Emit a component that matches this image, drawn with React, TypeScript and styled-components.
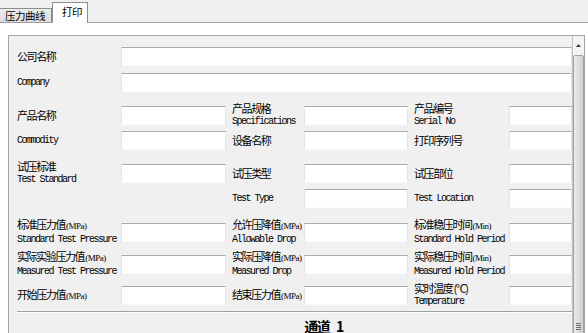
import styled, { createGlobalStyle } from 'styled-components';

const GlobalStyle = createGlobalStyle`
  html, body {
    margin: 0;
    padding: 0;
    overflow: hidden;
    background: #ffffff;
  }
  * { box-sizing: border-box; }
`;

const Window = styled.div`
  width: 588px;
  height: 333px;
  display: flex;
  flex-direction: column;
  background: #ffffff;
  overflow: hidden;
  font-family: "Noto Sans CJK SC", sans-serif;
  color: #000;
`;

// tabs
const TabStrip = styled.div`
  height: 23px;
  flex-shrink: 0;
  display: flex;
  align-items: flex-end;
  background: #f0f0f0;
  border-bottom: 1px solid #9d9d9d;
`;

const Tab = styled.div<{ $active?: boolean }>`
  display: flex;
  align-items: center;
  height: ${(p) => (p.$active ? '21px' : '14px')};
  margin-left: ${(p) => (p.$active ? '0' : '-1px')};
  margin-bottom: ${(p) => (p.$active ? '-1px' : '0')};
  padding: ${(p) => (p.$active ? '0 5px 3px 9px' : '0 6px 0 5px')};
  border: 1px solid #8e8e8e;
  border-bottom: none;
  background: ${(p) => (p.$active ? '#ffffff' : 'linear-gradient(#ececec, #dcdcdc)')};
  font-size: 10.5px;
  letter-spacing: -0.5px;
  line-height: 12px;
  white-space: nowrap;
`;

// tab page
const TabPage = styled.div`
  flex: 1;
  min-height: 0;
  padding: 12px 3px 0 8px;
  background: #ffffff;
`;

const GroupBox = styled.div`
  height: 600px;
  display: flex;
  border: 1px solid #a3a3a3;
  background: #f0f0f0;
`;

const Form = styled.div`
  flex: 1;
  padding: 11px 0 0 8px;
`;

const Row = styled.div<{ $mt: number }>`
  display: grid;
  grid-template-columns: 104px 105px 78px 104px 101px 1fr;
  height: 19px;
  margin-top: ${(p) => p.$mt}px;
  align-items: center;
`;

const Label = styled.div<{ $indent?: boolean }>`
  display: flex;
  flex-direction: column;
  justify-content: center;
  align-self: center;
  padding-left: ${(p) => (p.$indent ? '6px' : '0')};
  white-space: nowrap;
`;

const Cn = styled.span`
  font-family: "Noto Sans CJK SC", sans-serif;
  font-size: 11px;
  letter-spacing: -1.4px;
  line-height: 13px;
`;

const Unit = styled.span<{ $cjk?: boolean }>`
  font-family: ${(p) => (p.$cjk ? '"Noto Sans CJK SC", sans-serif' : '"Liberation Serif", serif')};
  font-size: ${(p) => (p.$cjk ? '11px' : '9px')};
  letter-spacing: ${(p) => (p.$cjk ? '-1.4px' : '-0.5px')};
  margin-left: 1px;
`;

const En = styled.span`
  font-family: "Liberation Mono", monospace;
  font-size: 10px;
  letter-spacing: -1.5px;
  line-height: 13px;
`;

const TextBox = styled.input<{ $full?: boolean }>`
  grid-column: ${(p) => (p.$full ? '2 / -1' : 'auto')};
  width: 100%;
  height: 19px;
  margin: 0;
  padding: 0 2px;
  background: #ffffff;
  border: 1px solid;
  border-color: #a9a9a9 #e4e4e4 #fafafa #e4e4e4;
  outline: none;
  font-size: 11px;
`;

const Divider = styled.div`
  margin-top: 10px;
  height: 2px;
  border-top: 1px solid #a0a0a0;
  border-bottom: 1px solid #ffffff;
`;

const Channel = styled.div`
  margin-top: 5px;
  padding-left: 58px;
  text-align: center;
  font-family: "Noto Sans CJK SC", sans-serif;
  font-size: 14px;
  font-weight: bold;
  letter-spacing: -1.5px;
  word-spacing: 5px;
  line-height: 16px;
`;

// fake scroll bar
const ScrollBar = styled.div`
  width: 12px;
  flex-shrink: 0;
  display: flex;
  flex-direction: column;
  border-left: 1px solid #c4c4c4;
  background: #f4f4f4;
`;

const ArrowButton = styled.div`
  height: 18px;
  flex-shrink: 0;
  display: flex;
  align-items: center;
  justify-content: center;
  padding-top: 1px;
`;

const Thumb = styled.div`
  height: 542px;
  flex-shrink: 0;
  margin-top: 1px;
  display: flex;
  flex-direction: column;
  align-items: center;
  justify-content: center;
  gap: 1px;
  border: 1px solid #a2a2a2;
  border-radius: 2px;
  background: linear-gradient(to right, #ececec, #dadada 60%, #cfcfcf);
`;

const GripLine = styled.div`
  width: 5px;
  height: 1px;
  background: #6a6a6a;
`;

type Field = { cn?: string; unit?: string; cjkUnit?: boolean; en?: string } | null;
type RowData = { mt: number; full?: Field; cells?: Field[] };

const rows: RowData[] = [
  { mt: 0, full: { cn: '公司名称' } },
  { mt: 7, full: { en: 'Company' } },
  {
    mt: 10,
    cells: [{ cn: '产品名称' }, { cn: '产品规格', en: 'Specifications' }, { cn: '产品编号', en: 'Serial No' }],
  },
  { mt: 10, cells: [{ en: 'Commodity' }, { cn: '设备名称' }, { cn: '打印序列号' }] },
  { mt: 10, cells: [{ cn: '试压标准', en: 'Test Standard' }, { cn: '试压类型' }, { cn: '试压部位' }] },
  { mt: 10, cells: [null, { en: 'Test Type' }, { en: 'Test Location' }] },
  {
    mt: 10,
    cells: [
      { cn: '标准压力值', unit: '(MPa)', en: 'Standard Test Pressure' },
      { cn: '允许压降值', unit: '(MPa)', en: 'Allowable Drop' },
      { cn: '标准稳压时间', unit: '(Min)', en: 'Standard Hold Period' },
    ],
  },
  {
    mt: 13,
    cells: [
      { cn: '实际实验压力值', unit: '(MPa)', en: 'Measured Test Pressure' },
      { cn: '实际压降值', unit: '(MPa)', en: 'Measured Drop' },
      { cn: '实际稳压时间', unit: '(Min)', en: 'Measured Hold Period' },
    ],
  },
  {
    mt: 13,
    cells: [
      { cn: '开始压力值', unit: '(MPa)' },
      { cn: '结束压力值', unit: '(MPa)' },
      { cn: '实时温度', unit: '(℃)', cjkUnit: true, en: 'Temperature' },
    ],
  },
];

function FieldLabel({ field, indent }: { field: Field; indent?: boolean }) {
  if (!field) return <Label $indent={indent} />;
  return (
    <Label $indent={indent}>
      {field.cn && (
        <Cn>
          {field.cn}
          {field.unit && <Unit $cjk={field.cjkUnit}>{field.unit}</Unit>}
        </Cn>
      )}
      {field.en && <En>{field.en}</En>}
    </Label>
  );
}

export default function App() {
  return (
    <>
      <GlobalStyle />
      <Window>
        <TabStrip>
          <Tab>压力曲线</Tab>
          <Tab $active>打印</Tab>
        </TabStrip>

        <TabPage>
          <GroupBox>
            <Form>
              {rows.map((row, i) => (
                <Row key={i} $mt={row.mt}>
                  {row.full ? (
                    <>
                      <FieldLabel field={row.full} />
                      <TextBox $full readOnly />
                    </>
                  ) : (
                    row.cells!.flatMap((cell, j) => [
                      <FieldLabel key={'l' + j} field={cell} indent={j > 0} />,
                      cell ? <TextBox key={'t' + j} readOnly /> : <span key={'t' + j} />,
                    ])
                  )}
                </Row>
              ))}
              <Divider />
              <Channel>通道 1</Channel>
            </Form>

            <ScrollBar>
              <ArrowButton>
                <svg width="5" height="3" viewBox="0 0 5 3">
                  <path d="M2.5 0 L5 3 L0 3 Z" fill="#3a3a3a" />
                </svg>
              </ArrowButton>
              <Thumb>
                <GripLine />
                <GripLine />
                <GripLine />
                <GripLine />
              </Thumb>
            </ScrollBar>
          </GroupBox>
        </TabPage>
      </Window>
    </>
  );
}
